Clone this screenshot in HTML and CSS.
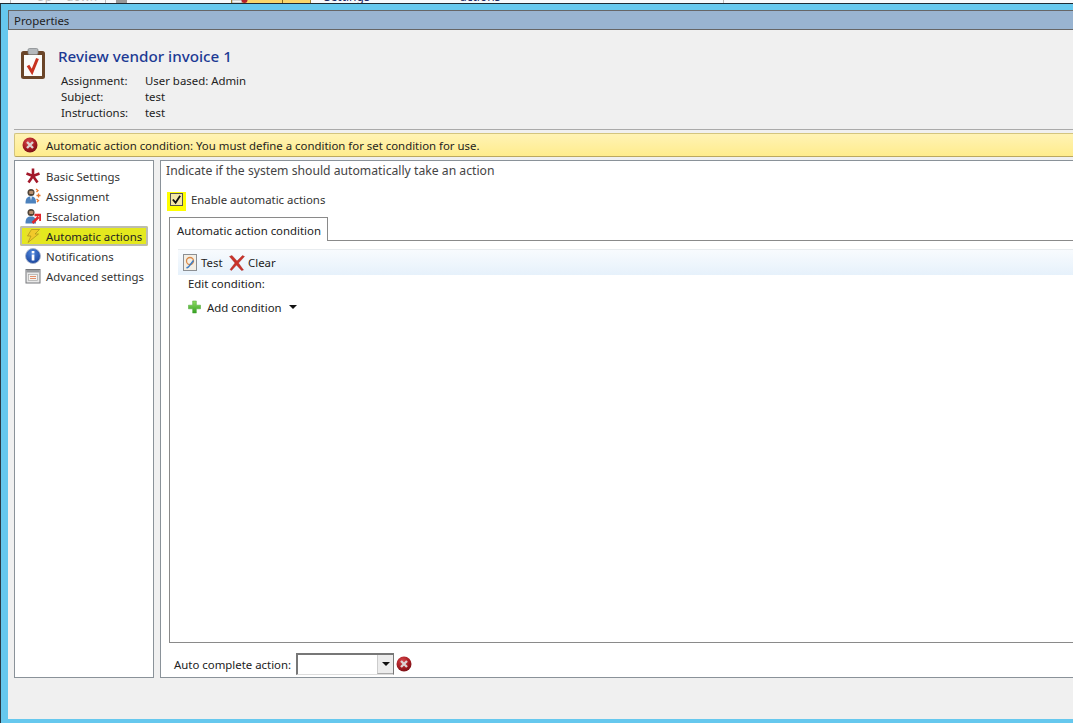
FILE: index.html
```html
<!DOCTYPE html>
<html lang="en">
<head>
<meta charset="utf-8">
<title>Properties</title>
<link rel="stylesheet" href="styles.css">
</head>
<body>
<div class="backdrop">
  <span class="bd-line bd-l1"></span>
  <span class="bd-text bd-up">Up</span><span class="bd-text bd-down">down</span>
  <span class="bd-line bd-l2"></span>
  <span class="bd-sq"></span>
  <span class="bd-tab"><svg class="bd-mini" viewBox="0 0 16 3"><rect x="0" y="0" width="10" height="3" fill="#f4f4f4" stroke="#888" stroke-width=".6"/><circle cx="12.500" cy="0" r="3" fill="#b3202a"/></svg></span>
  <span class="bd-dark bd-settings">Settings</span><span class="bd-dark bd-actions">actions</span>
  <span class="bd-line bd-l3"></span>
</div>
<div class="frame">
  <div class="window">
    <div class="titlebar">Properties</div>
    <div class="header">
      <svg class="clip" viewBox="0 0 26 32"><rect x="1" y="3" width="24" height="28" rx="2.500" fill="#6b4528"/><rect x="4" y="7" width="18" height="21" fill="#fbfbf9"/><rect x="8" y="0.500" width="10" height="6" rx="1.500" fill="#b4b8bb" stroke="#7e8285" stroke-width=".7"/><path d="M8 17.500l4 6.500 5.500-13.500" fill="none" stroke="#c8321f" stroke-width="3"/></svg>
      <div class="head-text">
        <h1 class="head-title">Review vendor invoice 1</h1>
        <div class="meta">
          <span>Assignment:</span><span>User based: Admin</span>
          <span>Subject:</span><span>test</span>
          <span>Instructions:</span><span>test</span>
        </div>
      </div>
    </div>
    <div class="warning">
      <svg class="err" viewBox="0 0 16 16"><defs><radialGradient id="e1" cx=".4" cy=".3" r=".8"><stop offset="0" stop-color="#d8454a"/><stop offset=".6" stop-color="#a01a20"/><stop offset="1" stop-color="#6e0f14"/></radialGradient></defs><circle cx="8" cy="8" r="7.500" fill="url(#e1)"/><path d="M5 5l6 6M11 5l-6 6" stroke="#ddd3d3" stroke-width="2.400"/></svg>
      <span>Automatic action condition: You must define a condition for set condition for use.</span>
    </div>
    <div class="body">
      <nav class="nav">
        <div class="nav-item">
          <svg class="ico" viewBox="0 0 16 16"><path d="M8 .5V8M8 8L1.500 5.500M8 8l6.500-2.500M8 8l-4.500 6.500M8 8l4.500 6.500" stroke="#a3182a" stroke-width="2.600" fill="none"/></svg>Basic Settings</div>
        <div class="nav-item">
          <svg class="ico" viewBox="0 0 16 16"><circle cx="6" cy="4.500" r="3.500" fill="#4f4236"/><path d="M4 3.500c1.500-1 3-1 4.500 0L8 6H4.500z" fill="#b98f6f"/><path d="M.5 15.500c0-5.500 2-7 5.500-7s5 1.500 5 7z" fill="#4d82bd"/><path d="M5 8.500l1 4 1-4z" fill="#e8eef5"/><path d="M11 1l2 1.500-1.500 1.500M11.500 7.500h4M13.500 5.500v4M11.500 11l2 1.500-1.500 1.500" fill="none" stroke="#e8762a" stroke-width="1.300"/></svg>Assignment</div>
        <div class="nav-item">
          <svg class="ico" viewBox="0 0 16 16"><circle cx="6" cy="4.500" r="3.500" fill="#4f4236"/><path d="M4 3.500c1.500-1 3-1 4.500 0L8 6H4.500z" fill="#b98f6f"/><path d="M.5 15.500c0-5.500 2-7 5.500-7s5 1.500 5 7z" fill="#4d82bd"/><path d="M7.500 15l6-6M9.500 7h6v6" fill="none" stroke="#e0262b" stroke-width="2.600"/></svg>Escalation</div>
        <div class="nav-item nav-active">
          <svg class="ico" viewBox="0 0 16 16"><rect x=".5" y="1" width="15" height="14" rx="3" fill="#e9df2c"/><path d="M6.500 1.500h8L10 6h3.500L3 14.500 6 8H2.500z" fill="#f2c92a" stroke="#a88f1a" stroke-width=".7"/></svg>Automatic actions</div>
        <div class="nav-item">
          <svg class="ico" viewBox="0 0 16 16"><defs><radialGradient id="i1" cx=".45" cy=".3" r=".8"><stop offset="0" stop-color="#4e86dc"/><stop offset="1" stop-color="#143c94"/></radialGradient></defs><circle cx="8" cy="8" r="7.500" fill="url(#i1)" stroke="#a9b6cc" stroke-width=".9"/><rect x="6.700" y="6.500" width="2.700" height="6" fill="#fff"/><rect x="6.700" y="3" width="2.700" height="2.400" fill="#fff"/></svg>Notifications</div>
        <div class="nav-item">
          <svg class="ico" viewBox="0 0 16 16"><rect x="1" y="1.500" width="14" height="13.500" fill="#e8e8e8" stroke="#77797c"/><rect x="1.500" y="2" width="13" height="2.500" fill="#9a9c9f"/><rect x="3.500" y="6.500" width="9" height="6" fill="#f6f3f0" stroke="#a8a8a8" stroke-width=".7"/><path d="M5 8.500h6M5 10.500h6" stroke="#e0906c"/></svg>Advanced settings</div>
      </nav>
      <main class="panel">
        <div class="panel-heading">Indicate if the system should automatically take an action</div>
        <div class="enable">
          <span class="hilite"><span class="checkbox"><svg viewBox="0 0 12 12"><path d="M2 6l3 3.500 5-7.500" fill="none" stroke="#111" stroke-width="2"/></svg></span></span>
          <span>Enable automatic actions</span>
        </div>
        <div class="tabs"><div class="tab">Automatic action condition</div></div>
        <div class="tabpage">
          <div class="toolbar">
            <svg class="test-ico" viewBox="0 0 14 17"><rect x=".5" y=".5" width="13" height="16" fill="#f3efe6" stroke="#8c8f93"/><circle cx="7" cy="7" r="3.500" fill="none" stroke="#d98a4a" stroke-width="1.300"/><path d="M3.500 14l2-1 5-6.500" fill="none" stroke="#3b7cc4" stroke-width="1.400"/></svg>
            <span class="tool-test">Test</span>
            <svg class="clear-ico" viewBox="0 0 16 16"><path d="M.5 1.500L3 .5l5 5.500L13.500.5l2 1L9.500 8l5 7-2 .5L7.500 10l-5 5.500-1.500-1L6 8z" fill="#c9332a" stroke="#a3241e" stroke-width=".4"/></svg>
            <span>Clear</span>
          </div>
          <div class="edit-label">Edit condition:</div>
          <div class="add">
            <svg class="plus" viewBox="0 0 14 14"><defs><linearGradient id="p1" x1="0" y1="0" x2="0" y2="1"><stop offset="0" stop-color="#8fdc62"/><stop offset="1" stop-color="#35a023"/></linearGradient></defs><path d="M5 .5h4v4.500h4.500v4H9v4.500H5V9H.5V5H5z" fill="url(#p1)" stroke="#3f9f2a" stroke-width=".5"/></svg>
            <span>Add condition</span>
            <span class="caret"></span>
          </div>
        </div>
        <div class="auto">
          <span>Auto complete action:</span>
          <span class="combo"><span class="combo-btn"><span class="caret"></span></span></span>
          <svg class="err" viewBox="0 0 16 16"><defs><radialGradient id="e2" cx=".4" cy=".3" r=".8"><stop offset="0" stop-color="#d8454a"/><stop offset=".6" stop-color="#a01a20"/><stop offset="1" stop-color="#6e0f14"/></radialGradient></defs><circle cx="8" cy="8" r="7.500" fill="url(#e2)"/><path d="M5 5l6 6M11 5l-6 6" stroke="#ddd3d3" stroke-width="2.400"/></svg>
        </div>
      </main>
    </div>
  </div>
</div>
</body>
</html>
```
FILE: styles.css
```css
* { box-sizing: border-box; }
html, body { margin: 0; padding: 0; }
body {
  width: 1073px;
  height: 723px;
  overflow: hidden;
  background: #f0f0f0;
  font-family: "Noto Sans", "Open Sans", sans-serif;
  font-size: 11.4px;
  color: #1e1e1e;
}
.backdrop {
  height: 4px;
  background: #f6f9fc;
  border-bottom: 1px solid #1c2a33;
  position: relative;
  overflow: hidden;
}
.bd-text, .bd-dark { position: absolute; top: -12px; font-size: 12px; color: #bbb; }
.bd-dark { color: #1d2a66; }
.bd-up { left: 36px; }
.bd-down { left: 66px; }
.bd-settings { left: 324px; }
.bd-actions { left: 460px; }
.bd-sq { position: absolute; left: 116px; top: 0; width: 11px; height: 3px; background: #999; }
.bd-tab {
  position: absolute;
  left: 231px;
  top: 0;
  width: 80px;
  height: 3px;
  background: linear-gradient(90deg, #f8d66b 0 50px, #8a6a1a 50px 51px, #f8d66b 51px);
  border-left: 1px solid #a08030;
  border-right: 1px solid #a08030;
  display: flex;
}
.bd-mini { width: 16px; height: 3px; }
.bd-line { position: absolute; top: 0; width: 1px; height: 3px; background: #bbb; }
.bd-l1 { left: 10px; }
.bd-l2 { left: 105px; }
.bd-l3 { left: 723px; }
.frame {
  height: 719px;
  background: #66c8ee;
  border-left: 1px solid #2a3a44;
  padding: 6px 0 4px 7px;
}
.window {
  height: 100%;
  background: #f0f0f0;
  display: flex;
  flex-direction: column;
}
.titlebar {
  height: 20px;
  flex: none;
  background: #99b4d1;
  border-top: 1px solid #666;
  border-bottom: 1px solid #666;
  border-left: 1px solid #666;
  padding-left: 5px;
  line-height: 20px;
}
.header {
  flex: none;
  height: 100px;
  display: flex;
  margin-left: 6px;
  border-bottom: 1px solid #aaa;
  padding: 18px 0 0 6px;
}
.clip { width: 26px; height: 32px; flex: none; }
.head-text { margin-left: 12px; }
.head-title {
  margin: -2px 0 0;
  font-size: 15.2px;
  font-weight: 500;
  color: #1c3a94;
  line-height: 20px;
}
.meta {
  margin: 7px 0 0 3px;
  display: grid;
  grid-template-columns: 84px auto;
  grid-auto-rows: 16px;
  line-height: 16px;
  color: #222;
}
.warning {
  flex: none;
  height: 24px;
  margin: 3px 0 0 6px;
  display: flex;
  align-items: center;
  gap: 8px;
  padding-left: 7px;
  background: linear-gradient(#fff3b5, #ffec8c);
  border: 1px solid #d3c47f;
  border-right: 0;
  border-bottom-color: #bba860;
  border-radius: 2px 0 0 2px;
}
.err { width: 16px; height: 16px; flex: none; }
.body {
  flex: 1;
  display: flex;
  min-height: 0;
  margin: 3px 0 0 6px;
  padding-bottom: 41px;
  gap: 6px;
}
.nav {
  width: 140px;
  flex: none;
  background: #fff;
  border: 1px solid #8a9299;
  padding: 5px 5px 6px 5px;
}
.nav-item {
  height: 20px;
  display: flex;
  align-items: center;
  gap: 5px;
  padding-left: 5px;
  color: #333;
}
.ico { width: 16px; height: 16px; flex: none; }
.nav-active {
  background: #e4e81e;
  outline: 2px solid #bcbcb0;
  outline-offset: -2px;
  border-radius: 2px;
  color: #222;
}
.panel {
  flex: 1;
  background: #fff;
  border: 1px solid #8a9299;
  border-right: 0;
  display: flex;
  flex-direction: column;
  min-width: 0;
}
.panel-heading {
  font-size: 12.2px;
  line-height: 18px;
  padding: 1px 0 0 5px;
  height: 19px;
  color: #444;
}
.enable {
  display: flex;
  align-items: flex-start;
  height: 20px;
  margin-top: 10px;
  padding-left: 6px;
  line-height: 20px;
  color: #333;
}
.hilite {
  width: 19px;
  height: 19px;
  margin: 2px 5px 0 0;
  padding: 1px 0 0 3px;
  background: #ffff00;
  display: flex;
  align-items: flex-start;
}
.checkbox {
  width: 13px;
  height: 13px;
  background: #f4e7a8;
  border: 1px solid #555;
  display: flex;
}
.checkbox svg { width: 11px; height: 11px; }
.tabs {
  margin: 7px 0 0 8px;
  height: 24px;
  border-bottom: 1px solid #8a8a8a;
  flex: none;
}
.tab {
  width: 159px;
  height: 24px;
  background: #fff;
  border: 1px solid #8a8a8a;
  border-bottom: 0;
  line-height: 25px;
  padding-left: 7px;
  color: #222;
}
.tabpage {
  flex: 1;
  margin-left: 8px;
  border-left: 1px solid #8a8a8a;
  border-bottom: 1px solid #8a8a8a;
  padding: 8px 0 0 8px;
}
.toolbar {
  height: 26px;
  display: flex;
  align-items: center;
  padding-left: 5px;
  background: linear-gradient(#f8fbfe, #e6f1fb);
  border-top: 1px solid #e8ecef;
  color: #222;
}
.test-ico { width: 14px; height: 17px; margin-right: 4px; flex: none; }
.tool-test { width: 28px; }
.clear-ico { width: 16px; height: 16px; margin-right: 3px; flex: none; }
.edit-label { margin: 1px 0 0 10px; line-height: 16px; color: #222; }
.add {
  display: flex;
  align-items: center;
  margin: 7px 0 0 10px;
  height: 16px;
  color: #222;
}
.plus { width: 13px; height: 14px; margin-right: 6px; flex: none; }
.caret {
  display: inline-block;
  width: 0;
  height: 0;
  border-left: 4px solid transparent;
  border-right: 4px solid transparent;
  border-top: 4px solid #111;
}
.add .caret { margin-left: 7px; }
.auto {
  flex: none;
  height: 34px;
  display: flex;
  align-items: center;
  padding: 8px 0 0 13px;
  color: #222;
}
.combo {
  width: 98px;
  height: 22px;
  margin: -1px 2px 0 5px;
  background: #fff;
  border: 1px solid #777;
  border-top-width: 2px;
  border-left-width: 2px;
  border-bottom: 1px solid #ddd;
  display: flex;
  justify-content: flex-end;
}
.combo-btn {
  width: 16px;
  background: #ececec;
  border-left: 1px solid #ccc;
  border-bottom: 1px solid #aaa;
  display: flex;
  align-items: center;
  justify-content: center;
}
```
